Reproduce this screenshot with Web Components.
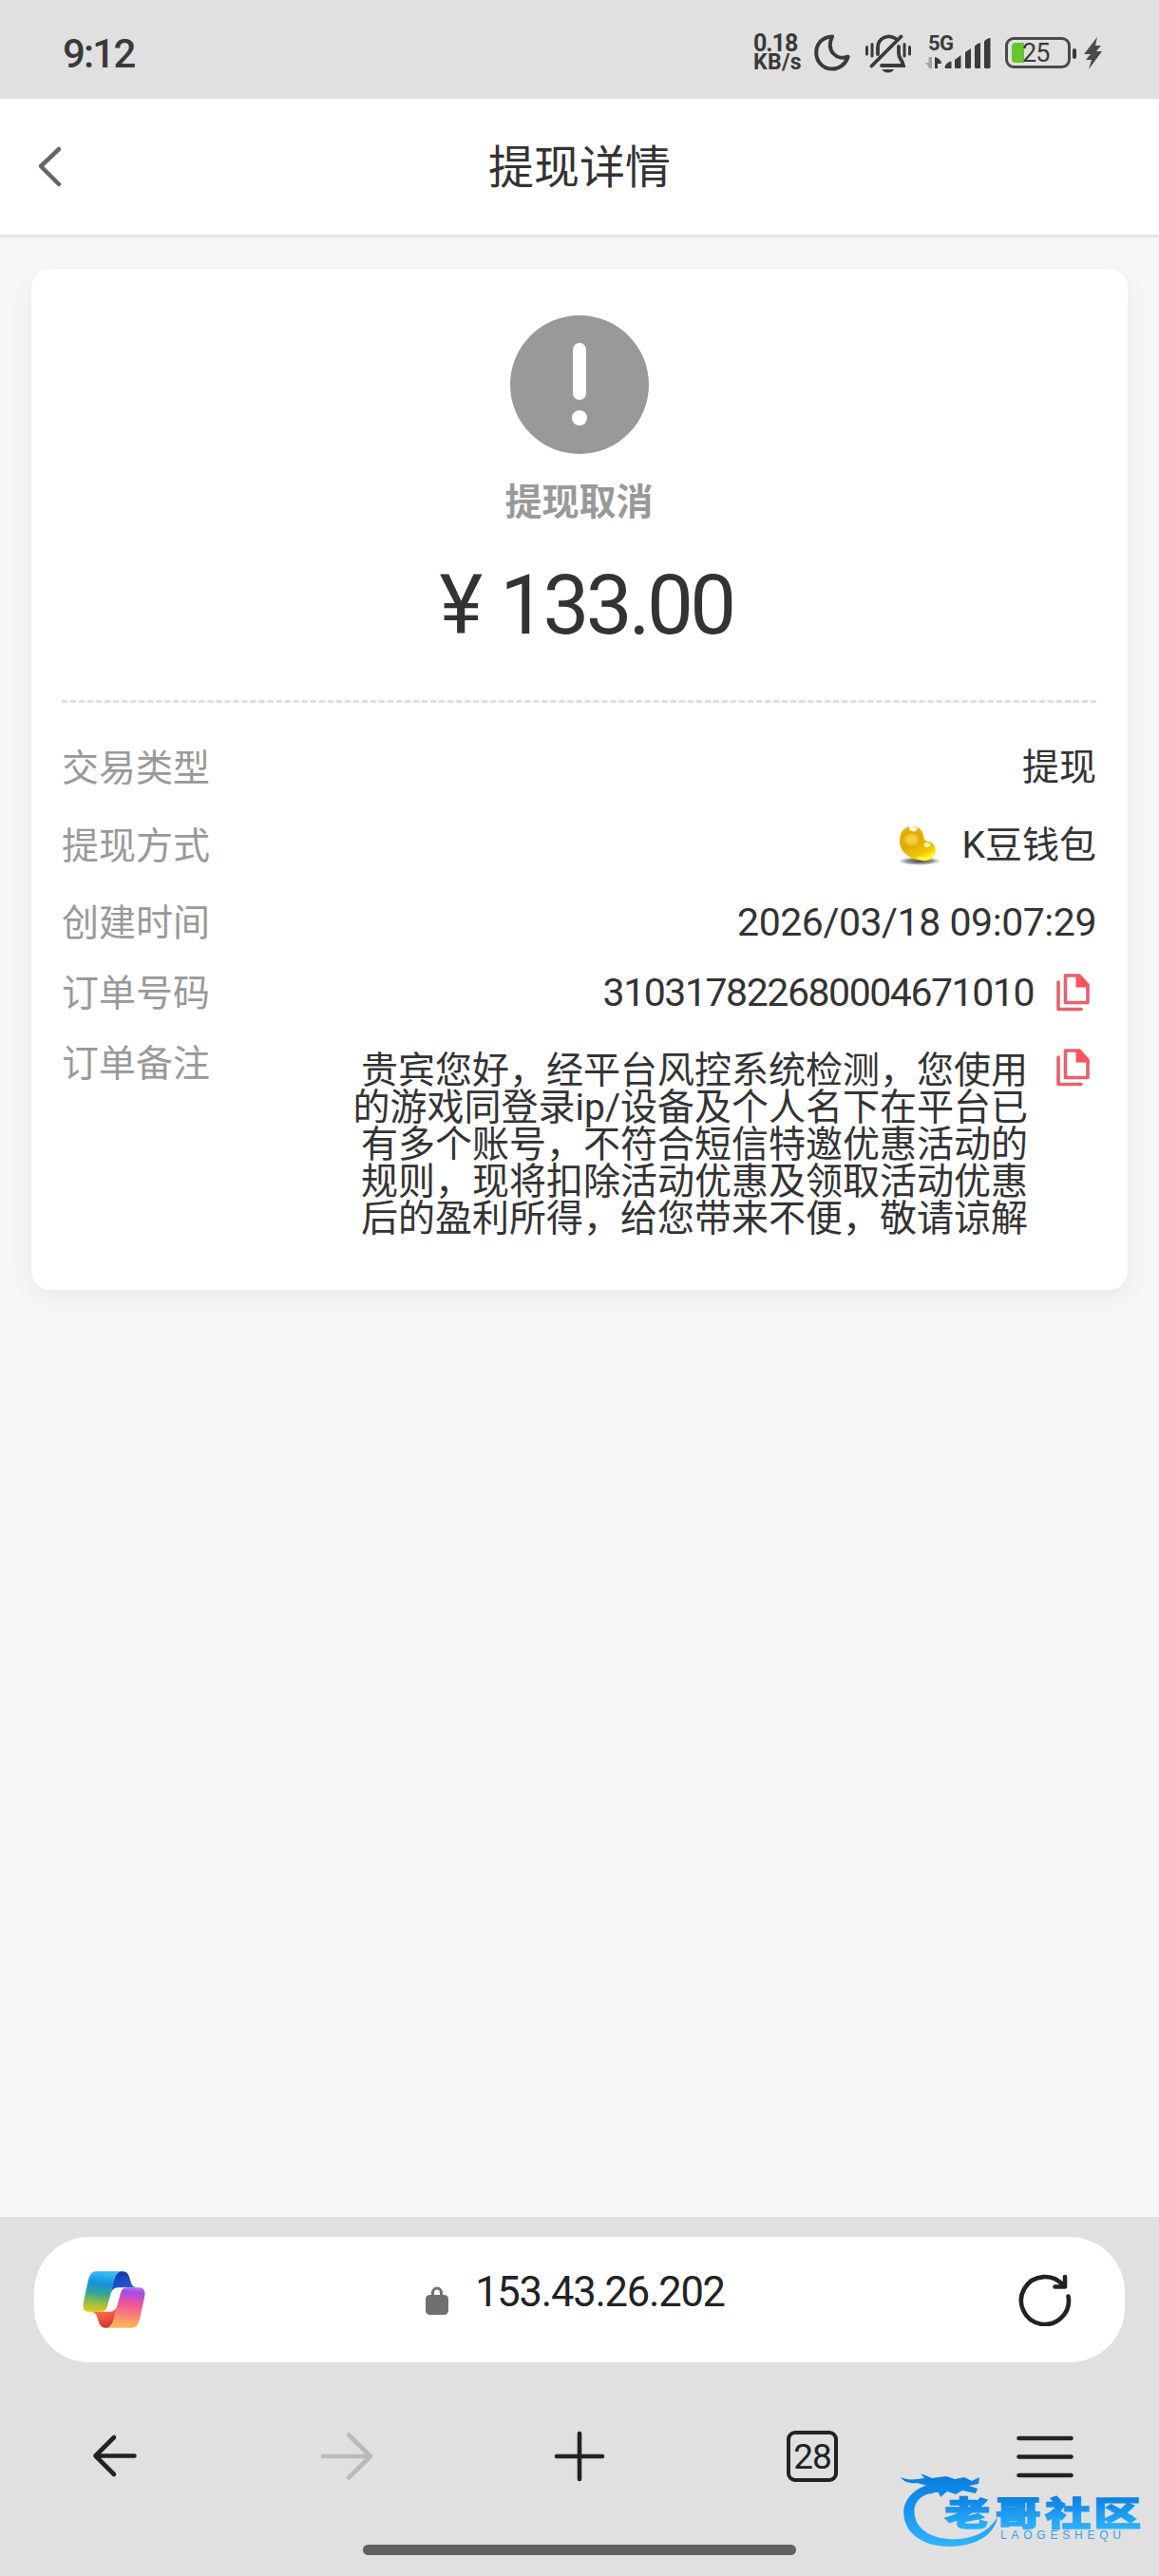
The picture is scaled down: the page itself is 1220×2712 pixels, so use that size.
<!DOCTYPE html>
<html lang="zh-CN">
<head>
<meta charset="utf-8">
<title>提现详情</title>
<style>
	html, body { margin:0; padding:0; }
	body {
		width:1220px;
		height:2712px;
		overflow:hidden;
		background-color:#f7f7f7;
		color:#333;
		font-family:Roboto, "Noto Sans CJK SC", sans-serif;
		font-size:39px;
	}
</style>
</head>
<body>
<phone-screen>
	<status-bar slot="top" time="9:12" speed="0.18" battery="25"></status-bar>
	<page-header slot="top">提现详情</page-header>

	<detail-card>
		<result-head slot="head" status="提现取消" amount="133.00"></result-head>
		<detail-row label="交易类型">提现</detail-row>
		<detail-row label="提现方式"><bean-icon></bean-icon>K豆钱包</detail-row>
		<detail-row label="创建时间" style="--row:80px;--size:41px;--track:-0.450px">2026/03/18 09:07:29</detail-row>
		<detail-row label="订单号码" copy style="--row:68px;--size:41px;--track:-1.450px">310317822680004671010</detail-row>
		<detail-row label="订单备注" copy note>贵宾您好，经平台风控系统检测，您使用<br>的游戏同登录ip/设备及个人名下在平台已<br>有多个账号，不符合短信特邀优惠活动的<br>规则，现将扣除活动优惠及领取活动优惠<br>后的盈利所得，给您带来不便，敬请谅解</detail-row>
	</detail-card>

	<browser-bar slot="bottom" tabs="28">153.43.26.202</browser-bar>
	<site-watermark slot="bottom"></site-watermark>
</phone-screen>

<script>
class PhoneScreen extends HTMLElement {
	constructor() {
		super();
		this.attachShadow({mode:'open'}).innerHTML=`
			<style>
				:host { display:flex; flex-direction:column; position:relative; width:1220px; height:2712px; }
				main { flex:1; padding:33px 33px 0; }
			</style>
			<slot name="top"></slot>
			<main><slot></slot></main>
			<slot name="bottom"></slot>`;
	}
}

class StatusBar extends HTMLElement {
	constructor() {
		super();
		this._shadowRoot=this.attachShadow({mode:'open'});
	}

	connectedCallback() {
		this._shadowRoot.innerHTML=this.getStyleString()+`
			<span class="time">${this.getAttribute('time')}</span>
			<div class="icons">
				<div class="speed"><b>${this.getAttribute('speed')}</b><b class="unit">KB/s</b></div>
				<!-- do not disturb -->
				<svg class="moon" width="38" height="39" viewBox="0 0 38 39" fill="none" stroke="#3a3a3a" stroke-width="4" stroke-linejoin="round">
					<path d="M19 2.4C9 2.5 2.2 10 2.2 19.5C2.2 29 9.500 36.600 18.700 36.600C27 36.600 33.500 31 35.600 23.600C24 28 12 18 19 2.400Z"/>
				</svg>
				<!-- muted bell -->
				<svg class="bell" width="49" height="42" viewBox="0 0 49 42" fill="none" stroke="#3a3a3a" stroke-width="3.800" stroke-linecap="round">
					<path d="M13 22V15C13 5 24 .5 31.500 5.500M35 14V21C35 27 39 28 40 34H17M6.500 34.500L37.500 3.500"/>
					<path d="M1.500 14.500V22M7 11.500V24M41 11.500V24M46.500 14.500V22" stroke-width="3"/>
					<path d="M17.500 38H30C28.500 42.500 19 42.500 17.500 38Z" fill="#3a3a3a" stroke="none"/>
				</svg>
				<div class="signal">
					<b>5G</b>
					<svg width="70" height="34" viewBox="0 0 70 34">
						<path d="M7 32H4C3 29 1 27 0 26H3.500V20H7Z" fill="#a5a5a5"/>
						<path d="M10 20V32H13V27H17C17 24 14 21 10 20Z" fill="#3a3a3a"/>
						<g fill="#3a3a3a">
							<path d="M20.500 30Q23 25 27.500 24.500V32H21Z"/>
							<path d="M31 23L37.500 18V30.500Q37.500 32 36 32H32.500Q31 32 31 30.500Z"/>
							<path d="M42 15L48 11V30.500Q48 32 46.500 32H43.500Q42 32 42 30.500Z"/>
							<path d="M52 8.500Q55 5 58 5V30.500Q58 32 56.500 32H53.500Q52 32 52 30.500Z"/>
							<path d="M62 3.500Q65 0 68.500 0V30.500Q68.500 32 67 32H63.500Q62 32 62 30.500Z"/>
						</g>
					</svg>
				</div>
				<div class="battery"><i></i><span>${this.getAttribute('battery')}</span></div>
				<div class="nub"></div>
				<svg class="bolt" width="20" height="34" viewBox="0 0 20 34">
					<path d="M14 0L0 18H7L2 24H8L5 34L19 15H13L18 9H12Z" fill="#4a4a4a"/>
				</svg>
			</div>`;
	}

	getStyleString() {
		return `<style>
			:host {
				display:flex;
				justify-content:space-between;
				height:104px;
				background-color:#e0e0e0;
				color:#3a3a3a;
				box-sizing:border-box;
				padding:0 59px 0 66px;
			}
			.time { font-size:42px; font-weight:500; line-height:113px; letter-spacing:-1.800px; }
			.icons { display:flex; align-items:flex-start; padding-top:35px; }
			.speed { display:flex; flex-direction:column; width:64px; font-size:25px; line-height:20px; padding-top:1px; }
			.speed b:first-child { letter-spacing:-1px; }
			.speed .unit { font-size:23px; line-height:20px; letter-spacing:.3px; }
			.moon { margin-top:1px; margin-right:16px; }
			.bell { margin-right:14px; }
			.signal { position:relative; width:70px; height:38px; margin-right:14px; }
			.signal b { position:absolute; left:3px; top:1px; font-size:22px; line-height:20px; letter-spacing:-.5px; }
			.signal svg { position:absolute; left:0; top:5px; }
			.battery {
				display:flex;
				align-items:center;
				box-sizing:border-box;
				width:69px;
				height:33px;
				margin-top:4px;
				border:3.500px solid #4a4a4a;
				border-radius:9px;
				padding-left:4px;
				font-size:27px;
				letter-spacing:-1px;
			}
			.battery i { width:13px; height:21px; margin-right:-2px; background-color:#66c62c; border-radius:4px 0 0 4px; }
			.nub { width:4px; height:11px; margin:16px 8px 0 2px; border-radius:2px; background-color:#3a3a3a; }
			.bolt { margin-top:4px; }
		</style>`;
	}
}

class PageHeader extends HTMLElement {
	constructor() {
		super();
		this.attachShadow({mode:'open'}).innerHTML=`
			<style>
				:host {
					display:grid;
					grid-template-columns:80px 1fr 80px;
					align-items:center;
					height:146px;
					box-sizing:border-box;
					border-bottom:3px solid #e4e4e4;
					background-color:#fff;
				}
				svg { margin-left:38px; }
				h1 { margin:0; padding-top:2px; font-size:48px; font-weight:400; line-height:60px; text-align:center; }
			</style>
			<svg width="28" height="46" viewBox="0 0 28 46" fill="none" stroke="#666" stroke-width="4.500" stroke-linecap="round" stroke-linejoin="round">
				<path d="M24 4L5 22L24 41"/>
			</svg>
			<h1><slot></slot></h1>`;
	}
}

class DetailCard extends HTMLElement {
	constructor() {
		super();
		this.attachShadow({mode:'open'}).innerHTML=`
			<style>
				:host {
					display:block;
					height:1075px;
					box-sizing:border-box;
					padding:49px 33px 0 32px;
					border-radius:20px;
					background-color:#fff;
					box-shadow:0 8px 24px rgba(0,0,0,.06);
				}
				hr { margin:0 0 26px; border:0; border-top:3px dashed #dedede; }
			</style>
			<slot name="head"></slot>
			<hr>
			<slot></slot>`;
	}
}

class ResultHead extends HTMLElement {
	constructor() {
		super();
		this._shadowRoot=this.attachShadow({mode:'open'});
	}

	connectedCallback() {
		this._shadowRoot.innerHTML=`
			<style>
				:host { display:flex; flex-direction:column; align-items:center; height:405px; }
				strong { margin-top:26px; color:#999; font-size:39px; line-height:50px; font-weight:700; }
				p { display:flex; margin:28px 0 0; padding-left:15px; font-size:87px; line-height:110px; }
				p .yen { margin-right:18px; }
				p .sum { letter-spacing:-3.700px; }
			</style>
			<svg width="146" height="146" viewBox="0 0 146 146">
				<circle cx="73" cy="73" r="73" fill="#999"/>
				<rect x="66" y="29" width="14" height="60" rx="7" fill="#fff"/>
				<circle cx="73" cy="108" r="8" fill="#fff"/>
			</svg>
			<strong>${this.getAttribute('status')}</strong>
			<p><span class="yen">¥</span><span class="sum">${this.getAttribute('amount')}</span></p>`;
	}
}

class DetailRow extends HTMLElement {
	constructor() {
		super();
		this._shadowRoot=this.attachShadow({mode:'open'});
	}

	connectedCallback() {
		let out=this.getStyleString();
		out+=`<span class="label">${this.getAttribute('label')}</span>`;
		out+=`<span class="value"><slot></slot></span>`;
		if (this.hasAttribute('copy')) {
			out+=`
				<svg width="36" height="40" viewBox="0 0 36 40" fill="none" stroke="#e6626c" stroke-width="3.600" stroke-linejoin="round">
					<path d="M9.500 2H24L33 12V30.500H9.500Z"/>
					<path d="M20.500 1H24.500L34.500 12V14.500H20.500Z" fill="#fb5560" stroke="none"/>
					<path d="M2 9V37.500H26" stroke-linecap="round"/>
				</svg>`;
		}
		this._shadowRoot.innerHTML=out;
	}

	getStyleString() {
		return `<style>
			:host { display:flex; align-items:center; height:var(--row, 82px); line-height:50px; }
			.label { flex:1; color:#999; padding-top:3px; }
			.value { display:flex; align-items:center; white-space:nowrap; padding-top:2px; font-size:var(--size, 39px); letter-spacing:var(--track, 0); }
			svg { margin-left:24px; margin-right:6px; padding-top:2px; }
			:host([note]) { align-items:flex-start; height:auto; }
			:host([note]) .label { padding-top:17px; }
			:host([note]) .value { display:block; text-align:right; line-height:39.100px; padding-top:30px; }
			:host([note]) svg { margin-left:30px; padding-top:26px; }
		</style>`;
	}
}

// golden bean in front of the wallet name
class BeanIcon extends HTMLElement {
	constructor() {
		super();
		this.attachShadow({mode:'open'}).innerHTML=`
			<style>
				:host { display:block; width:46px; height:42px; margin-right:22px; }
				svg { display:block; }
			</style>
			<svg width="46" height="42" viewBox="0 0 46 42">
				<defs>
					<linearGradient id="gold" x1=".1" y1="0" x2=".6" y2="1">
						<stop offset="0" stop-color="#e3b50a"/><stop offset=".5" stop-color="#e2a800"/><stop offset=".8" stop-color="#eec300"/><stop offset="1" stop-color="#fff012"/>
					</linearGradient>
					<radialGradient id="glow">
						<stop offset="0" stop-color="#f9d84e"/><stop offset=".7" stop-color="#efc02a"/><stop offset="1" stop-color="#dfa300" stop-opacity="0"/>
					</radialGradient>
					<radialGradient id="shade">
						<stop offset="0" stop-color="#444"/><stop offset=".6" stop-color="#777" stop-opacity=".8"/><stop offset="1" stop-color="#999" stop-opacity="0"/>
					</radialGradient>
				</defs>
				<ellipse cx="23" cy="37.500" rx="23" ry="4.500" fill="url(#shade)"/>
				<path d="M14 1C21 0 26 5 27 11C27.500 15 29 17 33 17C39 18 42 27 38 32C34 38 27 38 20 36C8 33 1 25 2 14C3 6 8 1 14 1Z" fill="url(#gold)"/>
				<ellipse cx="14.500" cy="15" rx="9.500" ry="8" fill="url(#glow)"/>
				<path d="M12 1.500C15 .5 19 1 21 3.500C19 7.500 15 7 12 4Z" fill="#fffbe0"/>
				<ellipse cx="31" cy="20.500" rx="3.500" ry="2.500" fill="#fff3a8"/>
				<path d="M22 34C29 36 34 34 37 29" fill="none" stroke="#fff34a" stroke-width="2.500" stroke-linecap="round"/>
			</svg>`;
	}
}

class BrowserBar extends HTMLElement {
	constructor() {
		super();
		this._shadowRoot=this.attachShadow({mode:'open'});
	}

	connectedCallback() {
		this._shadowRoot.innerHTML=this.getStyleString()+`
			<div class="address">
				<svg class="copilot" width="66" height="60" viewBox="50 62 201 182" preserveAspectRatio="none">
					<defs>
						<linearGradient id="cool" x1="0" y1="0" x2="-.1" y2="1">
							<stop offset="0" stop-color="#36b8f5"/><stop offset=".25" stop-color="#1490df"/><stop offset=".5" stop-color="#35a596"/><stop offset=".72" stop-color="#8fbc4b"/><stop offset="1" stop-color="#f5c80c"/>
						</linearGradient>
						<linearGradient id="blue" x1=".2" y1="0" x2=".6" y2="1">
							<stop offset="0" stop-color="#1632a8"/><stop offset="1" stop-color="#2466e0"/>
						</linearGradient>
						<linearGradient id="warm" x1=".1" y1="0" x2="0" y2="1">
							<stop offset="0" stop-color="#fbb357"/><stop offset=".28" stop-color="#fa7f78"/><stop offset=".55" stop-color="#ee5696"/><stop offset=".85" stop-color="#a84be6"/><stop offset="1" stop-color="#b778ef"/>
						</linearGradient>
						<linearGradient id="red" x1=".2" y1="0" x2=".6" y2="1">
							<stop offset="0" stop-color="#bd3438"/><stop offset=".6" stop-color="#f85c40"/><stop offset="1" stop-color="#fd7a42"/>
						</linearGradient>
						<path id="ribbon" d="M92 63H178C162 63 155 78 151 93L131 168C127 184 122 192 105 192H72C55 192 48 182 53 160L66 100C71 78 77 63 92 63Z"/>
						<path id="fold" d="M178 63H170C155 68 150 85 141 130C147 118 153 114 168 114H224C209 112 206 103 203 92C198 74 194 63 178 63Z"/>
					</defs>
					<use href="#fold" fill="url(#blue)"/>
					<use href="#ribbon" fill="url(#cool)"/>
					<g transform="rotate(180 150.500 153)">
						<use href="#fold" fill="url(#red)"/>
						<use href="#ribbon" fill="url(#warm)"/>
					</g>
				</svg>
				<div class="url">
					<svg width="24" height="30" viewBox="0 0 24 30">
						<path d="M7.500 11V7A4.500 5 0 0 1 16.500 7V11" fill="none" stroke="#707070" stroke-width="3"/>
						<rect y="9" width="24" height="21" rx="4.500" fill="#707070"/>
					</svg>
					<span><slot></slot></span>
				</div>
				<svg class="reload" width="56" height="56" viewBox="0 0 56 56" fill="none" stroke="#222" stroke-width="4.600" stroke-linecap="round" stroke-linejoin="round">
					<path d="M52.500 24.500A25 25 0 1 1 47.500 13.500M49 4V14.500H38.500"/>
				</svg>
			</div>
			<nav>
				<svg viewBox="0 0 60 60"><path d="M51.500 29.500H10.500M30 10L10.500 29.500L30 49"/></svg>
				<svg viewBox="0 0 60 60" class="off"><path d="M5 30H55M32 7.500L55 30L32 52.500"/></svg>
				<svg viewBox="0 0 60 60"><path d="M6 30H54M30 6V54"/></svg>
				<b class="tabs">${this.getAttribute('tabs')}</b>
				<svg viewBox="0 0 60 60"><path d="M2.500 11H57.500M2.500 30.500H57.500M2.500 50H57.500"/></svg>
			</nav>
			<div class="home"></div>`;
	}

	getStyleString() {
		return `<style>
			:host {
				display:flex;
				flex-direction:column;
				height:378px;
				box-sizing:border-box;
				padding:21px 36px 0;
				background-color:#e0e0e0;
				color:#222;
			}
			.address {
				display:flex;
				justify-content:space-between;
				align-items:center;
				height:132px;
				box-sizing:border-box;
				padding:0 56px 0 51px;
				border-radius:58px;
				background-color:#fff;
			}
			.url { display:flex; align-items:center; gap:28px; margin-right:14px; font-size:43.500px; line-height:50px; letter-spacing:-1.250px; }
			.url svg { margin-top:1px; }
			.url span { margin-top:-14px; }
			nav { display:flex; justify-content:space-between; align-items:center; height:60px; padding:0 54px; margin-top:69px; }
			nav svg { width:60px; height:60px; overflow:visible; fill:none; stroke:#222; stroke-width:4.600; stroke-linecap:round; stroke-linejoin:round; }
			nav .off { stroke:#bababa; }
			.tabs {
				width:54px;
				height:54px;
				margin:0 3px;
				box-sizing:border-box;
				border:4.500px solid #222;
				border-radius:9px;
				font-size:37px;
				font-weight:400;
				line-height:47px;
				letter-spacing:-1px;
				text-align:center;
			}
			.home { width:456px; height:11px; margin:63px auto 0; border-radius:6px; background-color:#606060; }
		</style>`;
	}
}

// forum stamp laid over the lower right corner
class SiteWatermark extends HTMLElement {
	constructor() {
		super();
		this.attachShadow({mode:'open'}).innerHTML=`
			<style>
				:host { display:block; position:absolute; left:945px; top:2600px; }
				svg { display:block; }
				text { font-family:"Noto Sans CJK SC", sans-serif; font-weight:900; }
				.latin { font-family:"Liberation Sans", sans-serif; font-weight:400; }
			</style>
			<svg width="260" height="86" viewBox="0 0 260 86">
				<defs>
					<linearGradient id="sky" gradientUnits="userSpaceOnUse" x1="0" y1="8" x2="0" y2="80">
						<stop offset="0" stop-color="#0a7fe0"/><stop offset=".4" stop-color="#1590ee"/><stop offset="1" stop-color="#30b4fb"/>
					</linearGradient>
					<linearGradient id="ink" gradientUnits="userSpaceOnUse" x1="0" y1="28" x2="0" y2="62">
						<stop offset="0" stop-color="#0a80e2"/><stop offset="1" stop-color="#2bb2fb"/>
					</linearGradient>
				</defs>
				<path d="M42 14C15 17 3 35 7 52C12 75 40 84 67 80C88 77 102 66 105 50C98 62 85 71 65 73C42 75 21 66 18 49C15 34 25 24 44 24Z" fill="url(#sky)"/>
				<path d="M3 8C9 11 17 11 28 9L24 4L36 9L51 7L60 10L70 8L78 12L86 8L85 15L75 17L84 20L82 25L68 22L61 26L52 23L45 29L42 22L34 26L35 18L20 14C13 15 6 13 3 8Z" fill="url(#sky)"/>
				<g fill="url(#ink)" stroke="url(#ink)" stroke-width="1.300" font-size="35">
					<text x="49" y="58.500" textLength="48" lengthAdjust="spacingAndGlyphs">老</text>
					<text x="102.500" y="58.500" textLength="48" lengthAdjust="spacingAndGlyphs">哥</text>
					<text x="155" y="58.500" textLength="48" lengthAdjust="spacingAndGlyphs">社</text>
					<text x="206" y="58.500" textLength="50" lengthAdjust="spacingAndGlyphs">区</text>
				</g>
				<text class="latin" x="108" y="73" font-size="12" textLength="127" fill="#3a9fe8">LAOGESHEQU</text>
			</svg>`;
	}
}

customElements.define("phone-screen", PhoneScreen);
customElements.define("status-bar", StatusBar);
customElements.define("page-header", PageHeader);
customElements.define("detail-card", DetailCard);
customElements.define("result-head", ResultHead);
customElements.define("detail-row", DetailRow);
customElements.define("bean-icon", BeanIcon);
customElements.define("browser-bar", BrowserBar);
customElements.define("site-watermark", SiteWatermark);
</script>
</body>
</html>
